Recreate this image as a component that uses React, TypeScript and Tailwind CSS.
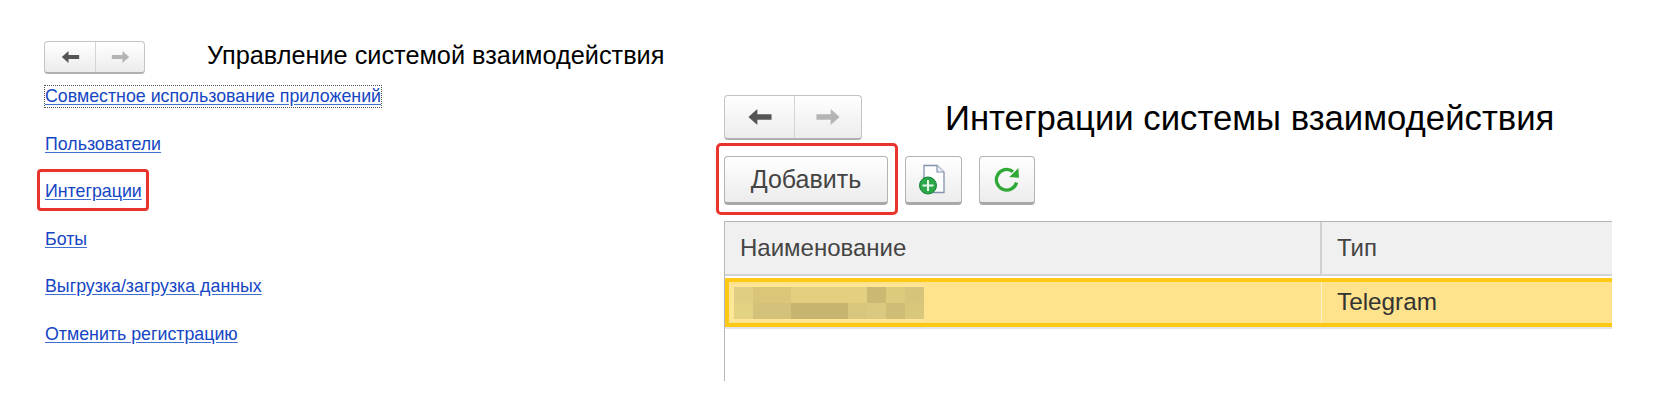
import React from "react";

const topCells = ["bg-[#e0cf82]","bg-[#d9c679]","bg-[#d9c679]","bg-[#e2d080]","bg-[#e2d080]","bg-[#e2d080]","bg-[#e2d080]","bg-[#ccb971]","bg-[#dcca7d]","bg-[#d5c47a]"];
const bottomCells = ["bg-[#e3d184]","bg-[#d5c27a]","bg-[#d5c27a]","bg-[#c7b46f]","bg-[#c7b46f]","bg-[#c7b46f]","bg-[#d8c67c]","bg-[#dbc97f]","bg-[#cfbd75]","bg-[#d9c87b]"];

function Arrow({ dir, className }: { dir: "left" | "right"; className: string }) {
  return (
    <svg viewBox="0 0 26 18" className={className} fill="currentColor">
      {dir === "left" ? <path d="M0 9 L10 0 L10 6 L26 6 L26 12 L10 12 L10 18 Z" /> : <path d="M26 9 L16 0 L16 6 L0 6 L0 12 L16 12 L16 18 Z" />}
    </svg>
  );
}

function NavButtons({ big }: { big?: boolean }) {
  return (
    <div className={`flex shrink-0 rounded-[4px] border border-[#c4c4c4] border-b-2 border-b-[#b0b0b0] bg-linear-to-b from-white to-[#ececec] ${big ? "h-[45px] w-[138px]" : "h-[33px] w-[101px]"}`}>
      <div className={`flex items-center justify-center border-r border-[#d4d4d4] ${big ? "w-[70px]" : "w-[51px]"}`}>
        <Arrow dir="left" className={`text-[#555] ${big ? "h-[16px] w-[26px]" : "h-[12px] w-[19px]"}`} />
      </div>
      <div className="flex flex-1 items-center justify-center">
        <Arrow dir="right" className={`text-[#b4b4b4] ${big ? "h-[16px] w-[26px]" : "h-[12px] w-[19px]"}`} />
      </div>
    </div>
  );
}

function LinkText({ children }: { children: React.ReactNode }) {
  return <a className="text-[17.8px] leading-[21px] text-[#1446c4] underline decoration-[#3f6fd0] underline-offset-[2px]">{children}</a>;
}

function ToolButton({ children, className }: { children: React.ReactNode; className: string }) {
  return (
    <div className={`flex h-[49px] items-center justify-center rounded-[4px] border border-[#b4b4b4] border-b-[3px] border-b-[#a8a8a8] bg-linear-to-b from-white to-[#ececec] ${className}`}>
      {children}
    </div>
  );
}

export default function App() {
  return (
    <div className="flex h-[404px] w-[1680px] overflow-hidden bg-white font-['Liberation_Sans',Arial,sans-serif]">
      <div className="ml-[45px] w-[679px] shrink-0 pt-[41px]">
        <div className="-ml-[1px] flex items-start">
          <NavButtons />
          <h1 className="ml-[62px] text-[25.3px] leading-[28px] font-normal text-black">Управление системой взаимодействия</h1>
        </div>
        <div className="mt-[12px] w-fit outline-1 outline-dotted outline-[#555] leading-[0]">
          <LinkText>Совместное использование приложений</LinkText>
        </div>
        <div className="mt-[27px] leading-[0]"><LinkText>Пользователи</LinkText></div>
        <div className="-ml-[8px] mt-[14px] flex h-[42px] w-[112px] items-center rounded-[4px] border-[3px] border-[#e8342c] pl-[5px] pt-[2px] leading-[0]">
          <LinkText>Интеграции</LinkText>
        </div>
        <div className="mt-[18px] leading-[0]"><LinkText>Боты</LinkText></div>
        <div className="mt-[26px] leading-[0]"><LinkText>Выгрузка/загрузка данных</LinkText></div>
        <div className="mt-[27px] leading-[0]"><LinkText>Отменить регистрацию</LinkText></div>
      </div>

      <div className="w-[888px] shrink-0 pt-[95px]">
        <div className="flex h-[45px] items-start">
          <NavButtons big />
          <h2 className="ml-[83px] mt-[4px] text-[34.7px] leading-[38px] font-normal text-black">Интеграции системы взаимодействия</h2>
        </div>
        <div className="mt-[3px] -ml-[8px] flex items-center">
          <div className="h-[72px] w-[182px] rounded-[5px] border-[3px] border-[#e8342c] pl-[5px] pt-[10px]">
            <ToolButton className="w-[164px]">
              <span className="text-[25px] leading-none text-[#444]">Добавить</span>
            </ToolButton>
          </div>
          <div className="ml-[7px] mt-[2px] flex gap-[17px]">
            <ToolButton className="w-[57px]">
              <svg viewBox="0 0 30 36" className="ml-[-3px] h-[36px] w-[30px]">
                <path d="M7 4.5 H20 L27 11 V31.5 H7 Z" fill="#fdfdfd" stroke="#8493ad" strokeWidth="1.3" />
                <path d="M20 4.5 V11 H27" fill="#e8ecf3" stroke="#8493ad" strokeWidth="1.2" />
                <circle cx="11" cy="24.5" r="8.5" fill="#2aa84a" stroke="#17803a" />
                <path d="M11 19 V30 M5.5 24.5 H16.5" stroke="#e8f8ea" strokeWidth="2" />
              </svg>
            </ToolButton>
            <ToolButton className="w-[56px]">
              <svg viewBox="0 0 24 24" className="h-[29px] w-[29px]" fill="none">
                <path d="M19.5 14.5 A8.5 8.5 0 1 1 16.5 5.5" stroke="#2fa836" strokeWidth="2.7" />
                <path d="M13.5 10 L21.5 10.5 L21 2.5 Z" fill="#2fa836" />
              </svg>
            </ToolButton>
          </div>
        </div>
        <div className="mt-[6px] h-[160px] border-l border-[#b8b8b8]">
          <div className="flex h-[55px] border-t border-b-2 border-t-[#b4b4b4] border-b-[#d4d4d4] bg-[#f0f0f0] text-[24px] text-[#444]">
            <div className="flex w-[597px] items-center border-r-2 border-[#d0d0d0] pl-[15px]">Наименование</div>
            <div className="flex flex-1 items-center pl-[15px]">Тип</div>
          </div>
          <div className="mt-[2px] flex h-[49px] border-y-4 border-l-4 border-[#ffc916] bg-[#fee28c] text-[24.3px] text-[#333]">
            <div className="flex w-[593px] items-center border-r border-[#fff4cc]">
              <div className="bg-[#ffe596] py-[3px] pl-[5px]">
                <div className="flex">{topCells.map((c, i) => <div key={i} className={`h-[16px] w-[19px] ${c}`} />)}</div>
                <div className="flex">{bottomCells.map((c, i) => <div key={i} className={`h-[16px] w-[19px] ${c}`} />)}</div>
              </div>
            </div>
            <div className="flex flex-1 items-center pl-[15px]">Telegram</div>
          </div>
          <div className="h-[2px] bg-[#e4e4e4]" />
        </div>
      </div>
    </div>
  );
}
